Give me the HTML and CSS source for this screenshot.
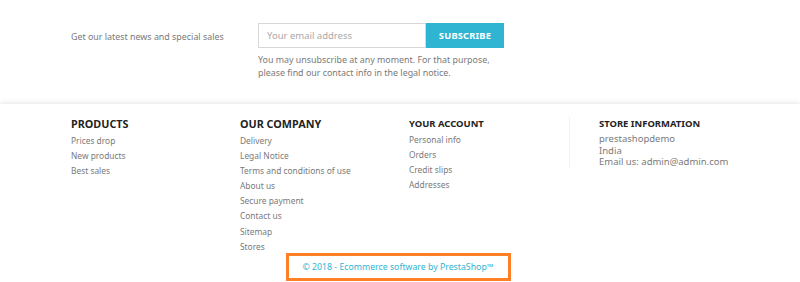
FILE: index.html
```html
<!DOCTYPE html>
<html>
<head>
<meta charset="utf-8">
<link rel="stylesheet" href="styles.css">
</head>
<body>
<section class="newsletter">
  <p class="nl-label">Get our latest news and special sales</p>
  <div class="nl-form">
    <div class="nl-row">
      <input class="nl-input" type="text" placeholder="Your email address">
      <button class="nl-btn">SUBSCRIBE</button>
    </div>
    <p class="nl-note">You may unsubscribe at any moment. For that purpose,<br>please find our contact info in the legal notice.</p>
  </div>
</section>
<footer class="footer">
  <div class="cols">
    <div class="col">
      <h3 class="h-big">PRODUCTS</h3>
      <ul class="links">
        <li>Prices drop</li>
        <li>New products</li>
        <li>Best sales</li>
      </ul>
    </div>
    <div class="col">
      <h3 class="h-big">OUR COMPANY</h3>
      <ul class="links">
        <li>Delivery</li>
        <li>Legal Notice</li>
        <li>Terms and conditions of use</li>
        <li>About us</li>
        <li>Secure payment</li>
        <li>Contact us</li>
        <li>Sitemap</li>
        <li>Stores</li>
      </ul>
    </div>
    <div class="col">
      <h4 class="h-small">YOUR ACCOUNT</h4>
      <ul class="links acct">
        <li>Personal info</li>
        <li>Orders</li>
        <li>Credit slips</li>
        <li>Addresses</li>
      </ul>
    </div>
    <div class="col store">
      <h4 class="h-small">STORE INFORMATION</h4>
      <p class="store-info">prestashopdemo<br>India<br>Email us: admin@admin.com</p>
    </div>
  </div>
  <div class="copy-wrap">
    <p class="copy">© 2018 - Ecommerce software by PrestaShop™</p>
  </div>
</footer>
</body>
</html>
```
FILE: styles.css
```css
* { box-sizing: border-box; }
html, body { margin: 0; padding: 0; background: #fff; }
body {
  font-family: "Noto Sans", "Open Sans", sans-serif;
  color: #7a7a7a;
  width: 800px;
  height: 282px;
  overflow: hidden;
}
p, ul, h3, h4 { margin: 0; padding: 0; }
ul { list-style: none; }

.newsletter {
  display: flex;
  padding: 23px 0 0 71px;
  height: 104px;
}
.nl-label {
  width: 187px;
  font-size: 8.9px;
  line-height: 27px;
  color: #7a7a7a;
}
.nl-row { display: flex; height: 25px; }
.nl-input {
  width: 168px;
  height: 25px;
  border: 1px solid #d8d8d8;
  padding: 0 8px;
  font-family: inherit;
  font-size: 9.5px;
  color: #7a7a7a;
  outline: none;
}
.nl-input::placeholder { color: #a9a9a9; }
.nl-btn {
  width: 78px;
  height: 25px;
  border: 0;
  background: #2fb5d2;
  color: #fff;
  font-family: inherit;
  font-weight: 700;
  font-size: 9.3px;
  letter-spacing: 0.2px;
  padding: 0;
}
.nl-note {
  margin-top: 5px;
  font-size: 8.9px;
  line-height: 13px;
  color: #7a7a7a;
}

.footer {
  box-shadow: 0 -1px 5px rgba(0,0,0,0.10);
  height: 178px;
  position: relative;
}
.cols {
  display: grid;
  grid-template-columns: 169px 169px 160px auto;
  padding: 12px 0 0 71px;
}
.h-big {
  font-size: 10.8px;
  font-weight: 700;
  color: #232323;
  line-height: 16px;
  margin-bottom: 1px;
}
.h-small {
  font-size: 9.45px;
  font-weight: 700;
  color: #232323;
  line-height: 16px;
  margin-bottom: 0;
}
.links li {
  font-size: 8.4px;
  line-height: 15.1px;
  color: #7a7a7a;
}
.store {
  border-left: 1px solid #f1f1f1;
  padding-left: 29px;
  height: 51px;
  margin-top: 1px;
}
.store .h-small { margin-top: -1px; }
.store-info {
  font-size: 9.5px;
  line-height: 11.7px;
  margin-top: 1px;
  color: #7a7a7a;
}
.copy-wrap {
  display: flex;
  justify-content: center;
  position: absolute;
  left: 0; right: 0; top: 149px;
}
.copy {
  width: 225px;
  height: 28px;
  margin-left: -4px;
  border: 3px solid #ff7f27;
  text-align: center;
  font-size: 8.75px;
  line-height: 22px;
  color: #2fb5d2;
}
```
